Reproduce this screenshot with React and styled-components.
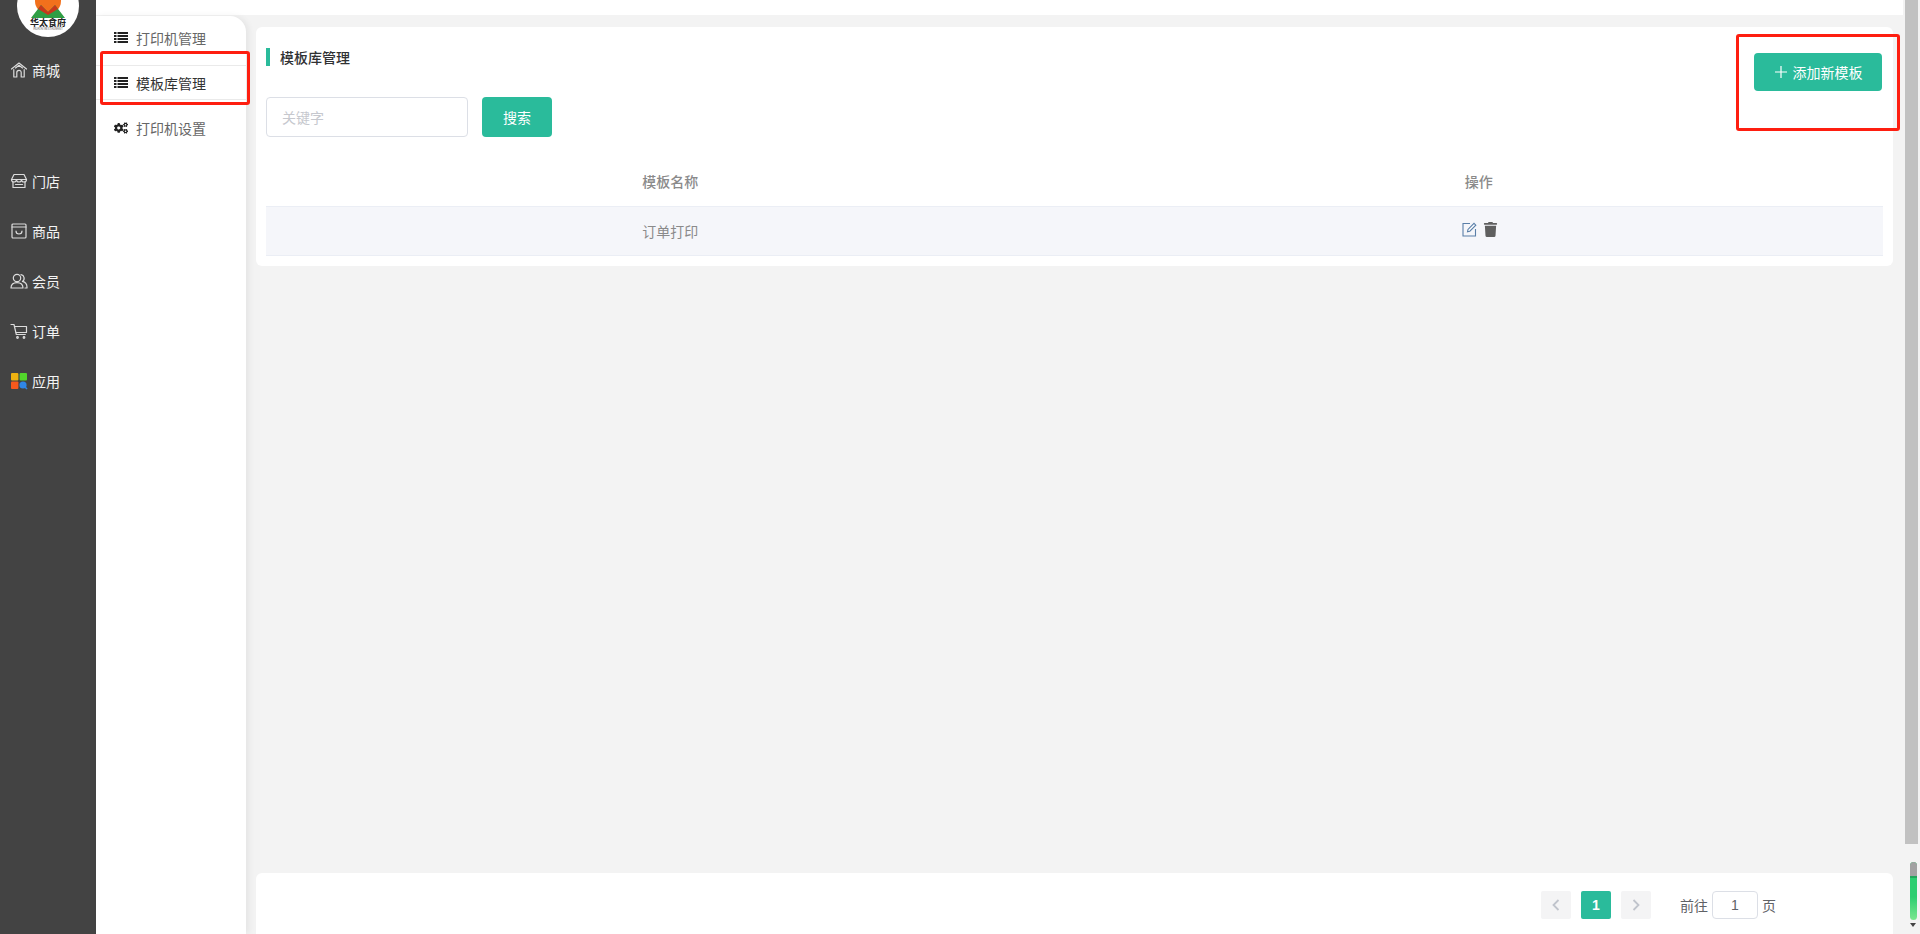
import styled, { createGlobalStyle } from "styled-components";
import { FaCogs, FaTrash } from "react-icons/fa";

const GREEN = "#2abb9b";

const GlobalStyle = createGlobalStyle`
  html, body {
    margin: 0;
    padding: 0;
    height: 100%;
    overflow: hidden;
    background: #f3f3f3;
    font-family: "Noto Sans CJK SC", "Liberation Sans", sans-serif;
    font-size: 14px;
  }
  * { box-sizing: border-box; }
`;

const Page = styled.div`
  position: relative;
  display: flex;
  width: 100%;
  height: 934px;
  overflow: hidden;
  background: #f3f3f3;
`;

const Sidebar = styled.aside`
  flex: 0 0 96px;
  background: #434343;
  display: flex;
  flex-direction: column;
  align-items: center;
`;

const Logo = styled.div`
  flex: none;
  width: 62px;
  height: 62px;
  margin-top: -25px;
  border-radius: 50%;
  background: #fff;
  display: flex;
  flex-direction: column;
  align-items: center;
  justify-content: flex-end;
  padding-bottom: 6px;
  overflow: hidden;
`;

const LogoName = styled.span`
  font-size: 9px;
  line-height: 10px;
  font-weight: 700;
  color: #222;
  white-space: nowrap;
`;

const LogoSub = styled.span`
  font-size: 3px;
  line-height: 3px;
  color: #555;
  white-space: nowrap;
`;

const NavList = styled.nav`
  width: 100%;
  margin-top: 8px;
  display: flex;
  flex-direction: column;
`;

const NavItem = styled.a`
  height: 50px;
  margin-top: ${(p) => p.$gap || 0}px;
  padding-left: 10px;
  display: flex;
  align-items: center;
  gap: 4px;
  color: #f4f4f4;
  font-size: 14px;
  svg { flex: none; }
`;

const Center = styled.div`
  flex: 1;
  min-width: 0;
  display: flex;
  flex-direction: column;
`;

const TopBar = styled.header`
  flex: 0 0 15px;
  background: #fff;
`;

const Body = styled.div`
  flex: 1;
  min-height: 0;
  display: flex;
`;

const SubMenu = styled.ul`
  flex: 0 0 150px;
  list-style: none;
  margin: 1px 0 0;
  padding: 4px 0 0;
  background: #fff;
  border-top-right-radius: 16px;
  box-shadow: 3px 0 6px rgba(0, 0, 0, 0.06);
`;

const SubItem = styled.li`
  height: 35px;
  margin-bottom: 10px;
  padding-left: 18px;
  display: flex;
  align-items: center;
  gap: 8px;
  font-size: 14px;
  color: ${(p) => (p.$active ? "#333" : "#666")};
  border-top: 1px solid ${(p) => (p.$active ? "#eaeaea" : "transparent")};
  border-bottom: 1px solid ${(p) => (p.$active ? "#eaeaea" : "transparent")};
  svg { flex: none; color: #222; }
`;

const Main = styled.main`
  flex: 1;
  min-width: 0;
  padding: 12px 10px 0;
  display: flex;
  flex-direction: column;
  justify-content: space-between;
`;

const Card = styled.section`
  background: #fff;
  border-radius: 6px;
  padding: 21px 10px 10px;
`;

const HeadRow = styled.div`
  height: 49px;
  display: flex;
  justify-content: space-between;
  align-items: flex-start;
`;

const Title = styled.h2`
  margin: 0;
  height: 18px;
  padding-left: 10px;
  border-left: 4px solid ${GREEN};
  font-size: 14px;
  line-height: 18px;
  font-weight: 500;
  color: #303133;
`;

const Button = styled.button`
  height: ${(p) => p.$height}px;
  width: ${(p) => p.$width}px;
  margin: ${(p) => p.$margin || 0};
  border: 0;
  border-radius: 4px;
  background: ${GREEN};
  color: #fff;
  font: inherit;
  font-size: 14px;
  display: flex;
  align-items: center;
  justify-content: center;
  gap: 5px;
  padding: 0;
`;

const SearchRow = styled.div`
  display: flex;
  gap: 14px;
`;

const SearchInput = styled.input`
  width: 202px;
  height: 40px;
  padding: 0 15px;
  border: 1px solid #dcdfe6;
  border-radius: 4px;
  font: inherit;
  color: #606266;
  outline: none;
  &::placeholder { color: #c6c8ce; opacity: 1; }
`;

const Table = styled.table`
  width: 100%;
  margin-top: 20px;
  border-collapse: collapse;
  table-layout: fixed;
`;

const Th = styled.th`
  height: 49px;
  padding: 0;
  font-size: 14px;
  font-weight: 500;
  color: #8a8a8a;
  text-align: center;
`;

const Td = styled.td`
  height: 49px;
  padding: 0;
  background: #f5f6fa;
  border-top: 1px solid #ebeef5;
  border-bottom: 1px solid #ebeef5;
  font-size: 14px;
  color: #8a8a8a;
  text-align: center;
`;

const Actions = styled.div`
  display: flex;
  justify-content: center;
  align-items: center;
  gap: 6px;
  margin-top: -3px;
  margin-left: 3px;
`;

const Footer = styled.footer`
  flex: 0 0 61px;
  background: #fff;
  border-radius: 6px 6px 0 0;
  padding: 18px 117px 0 0;
  display: flex;
  justify-content: flex-end;
  align-items: flex-start;
`;

const Pager = styled.div`
  display: flex;
  gap: 10px;
  margin-right: 29px;
`;

const PageButton = styled.div`
  width: 30px;
  height: 28px;
  border-radius: 2px;
  display: flex;
  align-items: center;
  justify-content: center;
  font-family: "Liberation Sans", sans-serif;
  font-size: 14px;
  font-weight: 700;
  background: ${(p) => (p.$current ? GREEN : "#f4f4f5")};
  color: ${(p) => (p.$current ? "#fff" : "#c0c4cc")};
`;

const Jump = styled.div`
  height: 28px;
  display: flex;
  align-items: center;
  gap: 4px;
  color: #606266;
  font-size: 14px;
`;

const JumpInput = styled.input`
  width: 46px;
  height: 28px;
  border: 1px solid #dcdfe6;
  border-radius: 4px;
  text-align: center;
  font-family: "Liberation Sans", sans-serif;
  font-size: 14px;
  color: #606266;
  outline: none;
  padding: 0;
`;

const ScrollTrack = styled.div`
  position: relative;
  flex: 0 0 17px;
  background: #f3f3f3;
  padding-left: 2px;
`;

const ScrollThumb = styled.div`
  width: 13px;
  height: 844px;
  background: #c1c1c1;
`;

const MiniBar = styled.div`
  position: absolute;
  left: 7px;
  top: 862px;
  width: 7px;
  height: 58px;
  border-radius: 4px;
  overflow: hidden;
  background: linear-gradient(#2bce70, #2bce70 60%, #7ae68f);
`;

const MiniCap = styled.div`
  height: 16px;
  background: #a2a2a2;
  border-bottom: 2px solid #22a65c;
`;

const MiniArrow = styled.div`
  position: absolute;
  left: 7px;
  top: 923px;
  width: 0;
  height: 0;
  border-left: 3.5px solid transparent;
  border-right: 3.5px solid transparent;
  border-top: 4px solid #444;
`;

const Mark = styled.div`
  position: absolute;
  left: ${(p) => p.$x}px;
  top: ${(p) => p.$y}px;
  width: ${(p) => p.$w}px;
  height: ${(p) => p.$h}px;
  border: 3px solid #fe1e10;
  border-radius: 3px;
  pointer-events: none;
`;

const LineIcon = ({ children }) => (
  <svg width="18" height="18" viewBox="0 0 18 18" fill="none" stroke="#dcdcdc" strokeWidth="1.2" strokeLinecap="round" strokeLinejoin="round">
    {children}
  </svg>
);

const HomeIcon = () => (
  <LineIcon>
    <path d="M1.5 8 9 2l7.5 6" />
    <path d="M3.8 8.5V16h3V11.5a2.2 2.2 0 0 1 4.4 0V16h3V8.5" />
    <path d="M5.5 7 9 4.3 12.5 7" />
  </LineIcon>
);

const StoreIcon = () => (
  <LineIcon>
    <path d="M4 2.5h10l2.5 5H1.5z" />
    <path d="M1.5 7.5a2.5 2.5 0 0 0 5 0 2.5 2.5 0 0 0 5 0 2.5 2.5 0 0 0 5 0" />
    <path d="M3 10v5.5h12V10" />
    <path d="M5.5 12.5h7" />
  </LineIcon>
);

const GoodsIcon = () => (
  <LineIcon>
    <rect x="2" y="2" width="14" height="14" rx="1" />
    <path d="M2 5h14" />
    <path d="M6 9c0 4 6 4 6 0" />
  </LineIcon>
);

const MembersIcon = () => (
  <LineIcon>
    <circle cx="7" cy="6" r="3.7" />
    <path d="M1 16c0-3.4 2.6-5.4 6-5.4s6 2 6 5.4z" />
    <path d="M11 2.6a3.7 3.7 0 0 1 1.4 6.8c2.8.7 4.6 2.8 4.6 5.8v.8h-2" />
  </LineIcon>
);

const CartIcon = () => (
  <LineIcon>
    <path d="M1 2.5h3l2.3 10h9" />
    <path d="M4.5 4.5h12v6H6" />
    <circle cx="7.5" cy="15.5" r=".8" />
    <circle cx="14" cy="15.5" r=".8" />
  </LineIcon>
);

const AppsIcon = () => (
  <svg width="18" height="18" viewBox="0 0 18 18">
    <rect x="1" y="1" width="7.4" height="7.4" rx="1" fill="#eeb211" />
    <rect x="9.6" y="1" width="7.4" height="7.4" rx="1" fill="#52d62b" />
    <rect x="1" y="9.6" width="7.4" height="7.4" rx="1" fill="#f7591c" />
    <circle cx="13" cy="13" r="3.6" fill="#2f87e8" />
    <path d="m15 15 2 2" stroke="#2f87e8" strokeWidth="1.6" />
  </svg>
);

const ListIcon = () => (
  <svg width="14" height="11" viewBox="0 0 14 11" fill="currentColor">
    <rect x="0" y="0" width="2.5" height="2" />
    <rect x="3.5" y="0" width="10.5" height="2" />
    <rect x="0" y="3" width="2.5" height="2" />
    <rect x="3.5" y="3" width="10.5" height="2" />
    <rect x="0" y="6" width="2.5" height="2" />
    <rect x="3.5" y="6" width="10.5" height="2" />
    <rect x="0" y="9" width="2.5" height="2" />
    <rect x="3.5" y="9" width="10.5" height="2" />
  </svg>
);

const EditIcon = () => (
  <svg width="15" height="15" viewBox="0 0 15 15" fill="none" stroke="#5a7fa8" strokeWidth="1.1">
    <path d="M8 1.5H1v12.5h12.5V7" />
    <path d="M5.5 9.8 6 7.4 12 1.4l1.8 1.8-6 6z" fill="#fff" />
  </svg>
);

const Chevron = ({ left }) => (
  <svg width="8" height="12" viewBox="0 0 8 12" fill="none" stroke="currentColor" strokeWidth="1.8">
    <path d={left ? "M6.5 1 1.5 6l5 5" : "M1.5 1l5 5-5 5"} />
  </svg>
);

const navItems = [
  { label: "商城", icon: <HomeIcon /> },
  { label: "门店", icon: <StoreIcon />, gap: 61 },
  { label: "商品", icon: <GoodsIcon /> },
  { label: "会员", icon: <MembersIcon /> },
  { label: "订单", icon: <CartIcon /> },
  { label: "应用", icon: <AppsIcon /> },
];

const subItems = [
  { label: "打印机管理", icon: <ListIcon /> },
  { label: "模板库管理", icon: <ListIcon />, active: true },
  { label: "打印机设置", icon: <FaCogs size={14} /> },
];

export default function App() {
  return (
    <Page>
      <GlobalStyle />
      <Sidebar>
        <Logo>
          <svg width="40" height="20" viewBox="0 0 40 20">
            <circle cx="20" cy="3" r="13" fill="#f2701c" />
            <path d="M3 20 13 7l7 7 7-7 10 13z" fill="#2f9e44" />
            <path d="M13 7l7 7 7-7 3 4-10 6-10-6z" fill="#c8371c" />
          </svg>
          <LogoName>华太食府</LogoName>
          <LogoSub>HUATAI RESTAURANT</LogoSub>
        </Logo>
        <NavList>
          {navItems.map((item) => (
            <NavItem key={item.label} $gap={item.gap}>
              {item.icon}
              {item.label}
            </NavItem>
          ))}
        </NavList>
      </Sidebar>
      <Center>
        <TopBar />
        <Body>
          <SubMenu>
            {subItems.map((item) => (
              <SubItem key={item.label} $active={item.active}>
                {item.icon}
                {item.label}
              </SubItem>
            ))}
          </SubMenu>
          <Main>
            <Card>
              <HeadRow>
                <Title>模板库管理</Title>
                <Button $width={128} $height={38} $margin="5px 1px 0 0">
                  <svg width="14" height="14" viewBox="0 0 14 14" stroke="#fff" strokeWidth="1.2">
                    <path d="M7 1v12M1 7h12" />
                  </svg>
                  添加新模板
                </Button>
              </HeadRow>
              <SearchRow>
                <SearchInput placeholder="关键字" />
                <Button $width={70} $height={40}>搜索</Button>
              </SearchRow>
              <Table>
                <thead>
                  <tr>
                    <Th>模板名称</Th>
                    <Th>操作</Th>
                  </tr>
                </thead>
                <tbody>
                  <tr>
                    <Td>订单打印</Td>
                    <Td>
                      <Actions>
                        <EditIcon />
                        <FaTrash size={15} color="#5f5f5f" />
                      </Actions>
                    </Td>
                  </tr>
                </tbody>
              </Table>
            </Card>
            <Footer>
              <Pager>
                <PageButton><Chevron left /></PageButton>
                <PageButton $current>1</PageButton>
                <PageButton><Chevron /></PageButton>
              </Pager>
              <Jump>
                前往
                <JumpInput defaultValue="1" />
                页
              </Jump>
            </Footer>
          </Main>
        </Body>
      </Center>
      <ScrollTrack>
        <ScrollThumb />
        <MiniBar><MiniCap /></MiniBar>
        <MiniArrow />
      </ScrollTrack>
      <Mark $x={100} $y={51} $w={150} $h={54} />
      <Mark $x={1736} $y={34} $w={164} $h={97} />
    </Page>
  );
}
